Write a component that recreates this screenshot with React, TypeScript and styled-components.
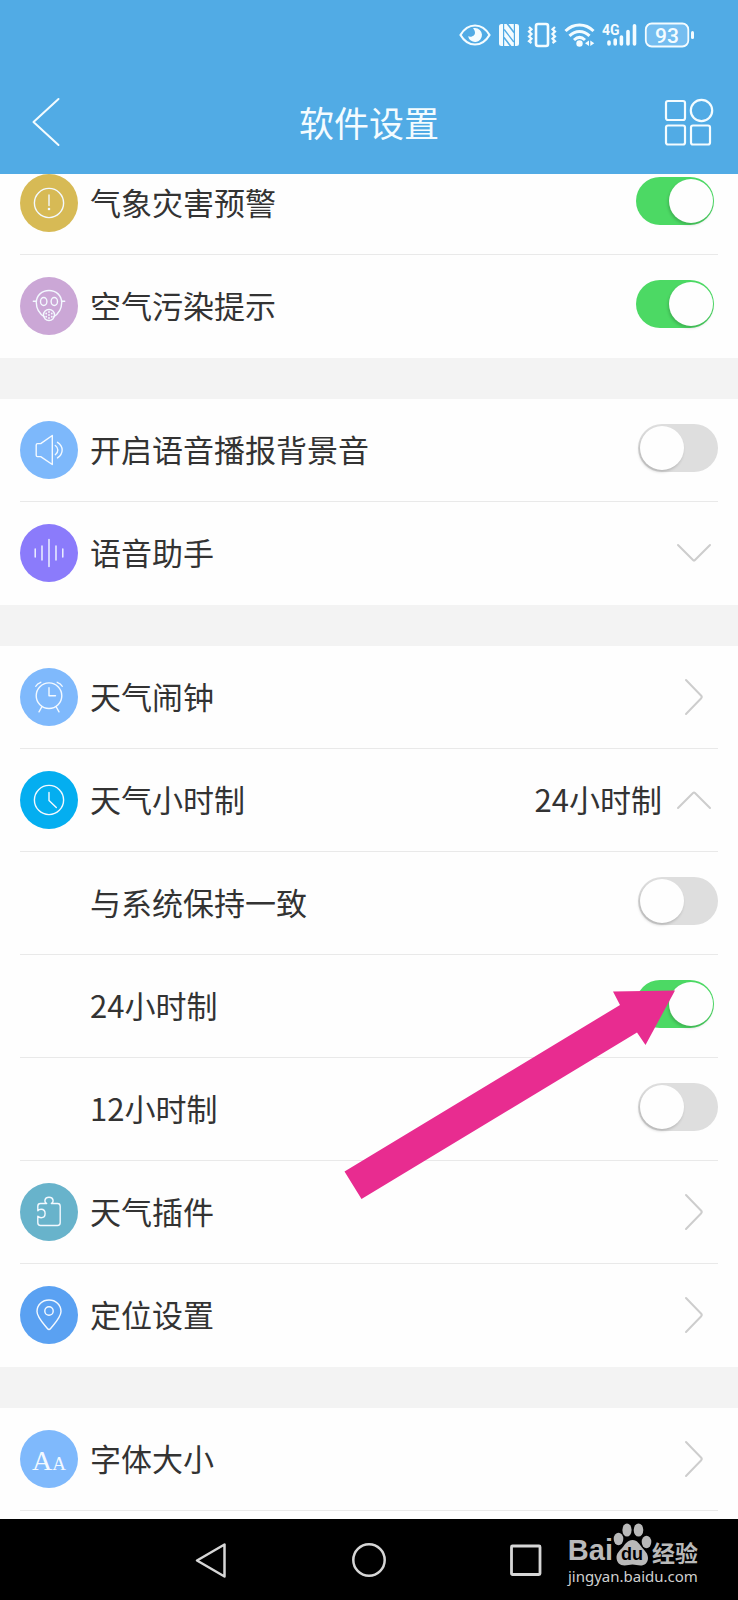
import React, { useState } from "react";
import styled, { createGlobalStyle } from "styled-components";

const GlobalStyle = createGlobalStyle`
  *, *::before, *::after { box-sizing: border-box; }
  body {
    margin: 0;
    background: #fefefe;
    color: #333;
    font-family: "Noto Sans CJK SC", "Noto Sans", sans-serif;
  }
  button { font: inherit; color: inherit; background: none; border: 0; padding: 0; cursor: pointer; }
`;

const Page = styled.div`
  display: flex;
  flex-direction: column;
  min-height: 100vh;
`;

const Header = styled.header`
  position: relative;
  z-index: 1;
  background: #51abe5;
  color: #f4fcff;
`;

const StatusBar = styled.div`
  display: flex;
  align-items: center;
  justify-content: flex-end;
  gap: 7px;
  height: 70px;
  padding-right: 43px;
`;

const TitleBar = styled.div`
  display: grid;
  grid-template-columns: 1fr auto 1fr;
  align-items: center;
  height: 104px;
  padding: 0 24px;
`;

const Title = styled.h1`
  margin: 0;
  font-size: 35px;
  line-height: 52px;
  font-weight: 400;
`;

const IconButton = styled.button<{ $side: "start" | "end" }>`
  display: flex;
  justify-self: ${(p) => p.$side};
`;

const Main = styled.main`
  flex: 1;
  overflow: hidden;
  background: #fefefe;
`;

const Scroller = styled.div`
  display: flex;
  flex-direction: column;
  gap: 41px;
  margin-top: -22px;
  background: #f3f3f3;
`;

const Group = styled.ul`
  margin: 0;
  padding: 0 20px;
  list-style: none;
  background: #fefefe;
`;

const Item = styled.li<{ $divided: boolean }>`
  position: relative;
  height: 103px;
  border-bottom: 1px solid ${(p) => (p.$divided ? "#e9e9e9" : "transparent")};
`;

const RowBody = styled.label`
  display: flex;
  align-items: center;
  width: 100%;
  height: 100%;
  cursor: pointer;
`;

const Badge = styled.span<{ $color: string }>`
  display: flex;
  flex: none;
  width: 58px;
  height: 58px;
  margin-right: 12px;
  border-radius: 50%;
  background: ${(p) => p.$color};
  color: #f3f9ff;
`;

const Label = styled.span`
  flex: 1;
  padding-bottom: 2px;
  font-size: 31px;
  line-height: 44px;
  text-align: left;
`;

const Value = styled(Label)`
  flex: none;
  margin-right: 14px;
`;

const Switch = styled.input`
  appearance: none;
  flex: none;
  display: flex;
  align-items: center;
  width: 80px;
  height: 48px;
  margin: 0 0 4px;
  padding: 0 2px;
  border-radius: 24px;
  background: #dedede;
  cursor: pointer;

  &::before {
    content: "";
    width: 44px;
    height: 44px;
    border-radius: 50%;
    background: #fefefe;
    box-shadow: -1px 2px 3px rgba(0, 0, 0, 0.18);
  }

  &:checked {
    width: 78px;
    margin-right: 4px;
    padding: 0 1px;
    justify-content: flex-end;
    background: #4cd964;
  }
`;

const ChevronBox = styled.span`
  display: flex;
  flex: none;
  justify-content: center;
  width: 36px;
  margin-right: 6px;
`;

const Pointer = styled.svg`
  position: absolute;
  top: 35px;
  right: 40px;
  z-index: 1;
  pointer-events: none;
`;

const NavBar = styled.nav`
  position: relative;
  display: flex;
  align-items: center;
  justify-content: center;
  gap: 124px;
  height: 81px;
  background: #000;
`;

const NavButton = styled.button`
  display: flex;
`;

const Watermark = styled.a`
  position: absolute;
  right: 40px;
  bottom: 14px;
  display: flex;
  flex-direction: column;
  align-items: center;
  color: #b9b9b9;
  text-decoration: none;
`;

const Brand = styled.span`
  display: flex;
  align-items: flex-end;
  height: 45px;
`;

const BrandLatin = styled.span`
  font: 700 29px/32px "Liberation Sans", sans-serif;
`;

const BrandHan = styled.span`
  font-size: 23px;
  line-height: 28px;
  font-weight: 700;
`;

const Domain = styled.span`
  font: 400 15px/20px "Noto Sans", sans-serif;
  color: #d0d0d0;
`;

const Line = ({ children }: { children: React.ReactNode }) => (
  <svg width="58" height="58" viewBox="0 0 58 58" fill="none" stroke="currentColor" strokeWidth="1.4" strokeLinecap="round" strokeLinejoin="round" aria-hidden="true">
    {children}
  </svg>
);

const glyphs = {
  alert: (
    <Line>
      <circle cx="29" cy="29" r="14.6" />
      <path d="M29 21v10.5" />
      <circle cx="29" cy="35" r="0.6" fill="currentColor" />
    </Line>
  ),
  mask: (
    <Line>
      <path d="M24.5 40C20 37 16.3 31.5 16.3 25.500c0-7 5.500-12 12.700-12s12.700 5 12.700 12c0 6-3.700 11.500-8.200 14.500" />
      <path d="M13.300 24.300h3M41.700 24.300h3" />
      <ellipse cx="23.700" cy="24.500" rx="3.200" ry="4" />
      <ellipse cx="34.300" cy="24.500" rx="3.200" ry="4" />
      <circle cx="29" cy="38" r="5.500" />
      <g strokeWidth="1.800">
        <path d="M29 35v.1M29 41v.1M26.200 36.500v.1M31.800 36.500v.1M26.200 39.700v.1M31.800 39.700v.1M29 38v.1" />
      </g>
    </Line>
  ),
  speaker: (
    <Line>
      <path d="M17.500 22.600h3.200L32.300 14.500v29L20.700 35.600h-3.200c-.8 0-1.300-.5-1.300-1.300V23.900c0-.8.5-1.300 1.300-1.300z" />
      <path d="M35.300 24.500c3.400 2.500 3.400 6.700 0 9.200M37.500 21.300c6.200 4 6.200 11.600 0 15.600" />
    </Line>
  ),
  wave: (
    <Line>
      <path d="M15.200 25v8M22 22v14M29 15.500v27M36 22v14M42.800 25v8" />
    </Line>
  ),
  alarm: (
    <Line>
      <circle cx="29" cy="27.700" r="12.800" />
      <path d="M29 19.700v8h6.500M15.800 18.300c1-2 2.700-3.300 5-4M42.200 18.300c-1-2-2.700-3.300-5-4M22 38.500l-3 5.300M36 38.500l3 5.300" />
    </Line>
  ),
  clock: (
    <Line>
      <circle cx="29" cy="29" r="14.600" />
      <path d="M29 21.500v8l7.300 7" />
    </Line>
  ),
  puzzle: (
    <Line>
      <path d="M20.500 20.500h6.200c-1.700-1-2-2.300-1.700-3.500.4-1.700 2-2.700 4-2.700s3.600 1 4 2.700c.3 1.200 0 2.500-1.700 3.500h6.200c1.600 0 2.700 1.100 2.700 2.700v16.600c0 1.600-1.100 2.700-2.700 2.700h-17c-1.600 0-2.700-1.100-2.700-2.700v-6.500c.8 1 2 1.400 3.300 1.400 2.300 0 4-1.800 4-4.200s-1.700-4.200-4-4.200c-1.300 0-2.500.4-3.300 1.400v-4.500c0-1.600 1.100-2.700 2.700-2.700z" />
    </Line>
  ),
  pin: (
    <Line>
      <path d="M29 43.500c-.6 0-1-.2-1.400-.7C22.500 36.500 17 31 17 25.500 17 18.800 22.300 14 29 14s12 4.800 12 11.500c0 5.500-5.500 11-10.600 17.300-.4.5-.8.7-1.400.7z" />
      <circle cx="29" cy="25" r="4.200" />
    </Line>
  ),
  font: (
    <svg width="58" height="58" viewBox="0 0 58 58" fill="currentColor" aria-hidden="true" fontFamily="Liberation Serif, serif">
      <text x="29" y="40" textAnchor="middle" fontSize="28">
        A<tspan fontSize="19">A</tspan>
      </text>
    </svg>
  ),
};

type Glyph = keyof typeof glyphs;

const chevrons = {
  right: { width: 26, height: 38, d: "M5 2l15 15.500q1.500 1.500 0 3L5 36" },
  down: { width: 36, height: 20, d: "M2 2l15 15q1 1 2 0L34 2" },
  up: { width: 36, height: 20, d: "M2 18L17 3q1-1 2 0l15 15" },
};

const Chevron = ({ to }: { to: keyof typeof chevrons }) => {
  const c = chevrons[to];
  return (
    <ChevronBox>
      <svg width={c.width} height={c.height} fill="none" stroke="#cdcdcd" strokeWidth="2" strokeLinecap="round" aria-hidden="true">
        <path d={c.d} />
      </svg>
    </ChevronBox>
  );
};

interface Setting {
  label: string;
  icon?: Glyph;
  color?: string;
  toggle?: boolean;
  chevron?: keyof typeof chevrons;
  value?: string;
  pointed?: boolean;
}

const groups: Setting[][] = [
  [
    { label: "气象灾害预警", icon: "alert", color: "#d7ba55", toggle: true },
    { label: "空气污染提示", icon: "mask", color: "#cba7d6", toggle: true },
  ],
  [
    { label: "开启语音播报背景音", icon: "speaker", color: "#7db8fb", toggle: false },
    { label: "语音助手", icon: "wave", color: "#8b7bfb", chevron: "down" },
  ],
  [
    { label: "天气闹钟", icon: "alarm", color: "#7fb9fc", chevron: "right" },
    { label: "天气小时制", icon: "clock", color: "#04aef0", value: "24小时制", chevron: "up" },
    { label: "与系统保持一致", toggle: false },
    { label: "24小时制", toggle: true, pointed: true },
    { label: "12小时制", toggle: false },
    { label: "天气插件", icon: "puzzle", color: "#68b3cb", chevron: "right" },
    { label: "定位设置", icon: "pin", color: "#5aa1f2", chevron: "right" },
  ],
  [{ label: "字体大小", icon: "font", color: "#7fb9fc", chevron: "right" }],
];

const SettingRow = ({ item, divided }: { item: Setting; divided: boolean }) => {
  const [on, setOn] = useState(!!item.toggle);
  const isSwitch = item.toggle !== undefined;
  const content = (
    <>
      <Badge $color={item.color ?? "transparent"}>{item.icon && glyphs[item.icon]}</Badge>
      <Label>{item.label}</Label>
      {item.value && <Value>{item.value}</Value>}
      {isSwitch && <Switch type="checkbox" role="switch" checked={on} onChange={() => setOn(!on)} />}
      {item.chevron && <Chevron to={item.chevron} />}
    </>
  );
  return (
    <Item $divided={divided}>
      {isSwitch ? <RowBody>{content}</RowBody> : <RowBody as="button">{content}</RowBody>}
      {item.pointed && (
        <Pointer width="334" height="212" aria-hidden="true">
          <path d="M331 0.500L301.500 55 293 42.500 17.500 209 0.500 181.500 276 15 269 1.500z" fill="#e82c90" />
        </Pointer>
      )}
    </Item>
  );
};

const StatusIcons = () => (
  <>
    <svg width="32" height="26" viewBox="0 0 32 26" fill="none" stroke="currentColor" strokeWidth="2.200" aria-hidden="true">
      <path d="M1.500 13C5 7 10 3.500 16 3.500S27 7 30.500 13C27 19 22 22.500 16 22.500S5 19 1.500 13z" />
      <path d="M16 6a7 7 0 1 1-6.900 8.200c2.900 1.300 6.900-.3 6.900-3.500 0-1.900-.9-3.200-2-4.200.6-.4 1.300-.5 2-.5z" fill="currentColor" stroke="none" />
    </svg>
    <svg width="22" height="24" viewBox="0 0 22 24" fill="currentColor" aria-hidden="true">
      <path d="M3.500 1H5v22H3.500A2.500 2.500 0 0 1 1 20.500v-17A2.500 2.500 0 0 1 3.500 1zM17 1h1.500A2.500 2.500 0 0 1 21 3.500v17a2.500 2.500 0 0 1-2.500 2.500H17z" />
      <path d="M6.200 1h2.300l7.300 9.500V23h-2.300L6.200 13.500z" />
      <path d="M10.500 1h5.300v7zM6.200 16v7h5.300z" />
      <path d="M6.200 6.500l9.600 12.500" stroke="#51abe5" strokeWidth="1.300" fill="none" />
    </svg>
    <svg width="30" height="26" viewBox="0 0 30 26" fill="none" stroke="currentColor" strokeWidth="2.200" aria-hidden="true">
      <rect x="9" y="2" width="12" height="22" rx="2" strokeWidth="2.600" />
      <path d="M2 5l2.500 2.300L2 9.600l2.500 2.400L2 14.400l2.500 2.400L2 19.200 4.500 21M28 5l-2.500 2.300L28 9.600 25.500 12l2.500 2.400-2.500 2.400 2.500 2.400-2.500 1.800" />
    </svg>
    <svg width="31" height="26" viewBox="0 0 31 26" fill="none" stroke="currentColor" strokeWidth="3" aria-hidden="true">
      <path d="M1.500 9c8-8 20-8 28 0M5.500 13.800c6-5.800 14-5.800 20 0M10 18c3.500-3.300 7.500-3.300 11 0" />
      <circle cx="15.500" cy="21.500" r="3.200" fill="currentColor" stroke="none" />
      <path d="M25 18.500v5.500L21 21.200zM26.300 18.500v5.500l4-2.800z" fill="currentColor" stroke="none" />
    </svg>
    <svg width="35" height="26" viewBox="0 0 35 26" fill="none" stroke="currentColor" strokeWidth="3.600" strokeLinecap="round" aria-hidden="true">
      <path d="M7 20v2M13.200 18v4M19.400 15v7M26 9.500v12.500M32.500 3.800v18.200" />
      <text x="0" y="13" fontSize="14" fontWeight="700" fontFamily="Roboto, sans-serif" fill="currentColor" stroke="none">4G</text>
    </svg>
    <svg width="51" height="26" viewBox="0 0 51 26" aria-hidden="true">
      <rect x="1.800" y="1.500" width="42.500" height="23" rx="6" fill="#74bdf0" stroke="currentColor" strokeWidth="1.800" />
      <rect x="47" y="9" width="3" height="8" rx="1.500" fill="currentColor" />
      <text x="23" y="20.500" textAnchor="middle" fontSize="21" fontWeight="500" fontFamily="Roboto, sans-serif" fill="currentColor">93</text>
    </svg>
  </>
);

export default function App() {
  return (
    <Page>
      <GlobalStyle />
      <Header>
        <StatusBar>
          <StatusIcons />
        </StatusBar>
        <TitleBar>
          <IconButton $side="start" aria-label="返回">
            <svg width="38" height="50" fill="none" stroke="currentColor" strokeWidth="2" strokeLinecap="round" strokeLinejoin="round">
              <path d="M34.500 2L9.500 25l25 23" />
            </svg>
          </IconButton>
          <Title>软件设置</Title>
          <IconButton $side="end" aria-label="更多">
            <svg width="50" height="50" fill="none" stroke="currentColor" strokeWidth="2.200">
              <rect x="2" y="4" width="19" height="19" rx="2" />
              <circle cx="37.500" cy="13.500" r="10.700" />
              <rect x="2" y="28.500" width="19" height="19" rx="2" />
              <rect x="27" y="28.500" width="19" height="19" rx="2" />
            </svg>
          </IconButton>
        </TitleBar>
      </Header>
      <Main>
        <Scroller>
          {groups.map((items, g) => (
            <Group key={g}>
              {items.map((item, i) => (
                <SettingRow key={item.label} item={item} divided={i < items.length - 1 || items.length === 1} />
              ))}
            </Group>
          ))}
        </Scroller>
      </Main>
      <NavBar>
        <NavButton aria-label="后退">
          <svg width="34" height="36" fill="none" stroke="#d6d6d6" strokeWidth="2.500" strokeLinejoin="round">
            <path d="M30.500 2.500v32L3 18.500z" />
          </svg>
        </NavButton>
        <NavButton aria-label="主屏幕">
          <svg width="34" height="36" fill="none" stroke="#d6d6d6" strokeWidth="2.500">
            <circle cx="17" cy="18" r="15.700" />
          </svg>
        </NavButton>
        <NavButton aria-label="最近任务">
          <svg width="34" height="36" fill="none" stroke="#d6d6d6" strokeWidth="2.800">
            <rect x="1.500" y="4" width="28.500" height="28.500" rx="1" />
          </svg>
        </NavButton>
        <Watermark href="#">
          <Brand>
            <BrandLatin>Bai</BrandLatin>
            <svg width="39" height="44" viewBox="0 0 39 44" fill="currentColor" aria-hidden="true">
              <ellipse cx="5.500" cy="17" rx="4.800" ry="6.200" />
              <ellipse cx="14" cy="8" rx="4.600" ry="6.600" />
              <ellipse cx="25.500" cy="8" rx="4.800" ry="6.600" />
              <ellipse cx="33.500" cy="20" rx="4.800" ry="6.200" />
              <path d="M19.500 18c5 0 7 4.500 9.500 7.500 3 3.500 6 6 6 10.500 0 5-3.500 7.500-7.500 7.500-3 0-5-1-8-1s-5 1-8 1c-4.500 0-8-3-8-8 0-4 3-7 6-10 3-3.500 5-7.500 10-7.500z" />
              <text x="19" y="38" textAnchor="middle" fontSize="18" fontWeight="700" fontFamily="Liberation Sans, sans-serif" fill="#000">du</text>
            </svg>
            <BrandHan>经验</BrandHan>
          </Brand>
          <Domain>jingyan.baidu.com</Domain>
        </Watermark>
      </NavBar>
    </Page>
  );
}
